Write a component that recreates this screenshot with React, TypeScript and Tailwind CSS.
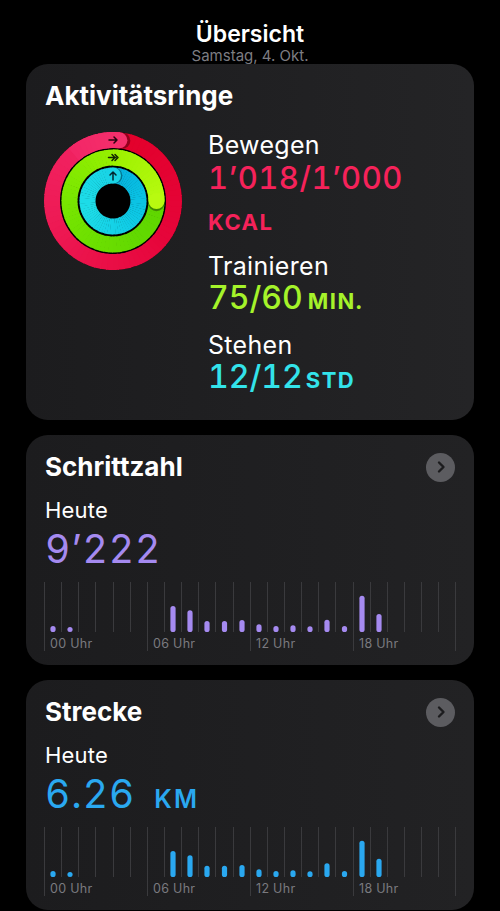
import React from "react";

type Stop = [number, string];

const toRad = (deg: number) => ((deg - 90) * Math.PI) / 180;
const pt = (cx: number, cy: number, r: number, deg: number): [number, number] => [
  cx + r * Math.cos(toRad(deg)),
  cy + r * Math.sin(toRad(deg)),
];
const arc = (cx: number, cy: number, r: number, a0: number, a1: number) => {
  const [x0, y0] = pt(cx, cy, r, a0);
  const [x1, y1] = pt(cx, cy, r, a1);
  const large = a1 - a0 > 180 ? 1 : 0;
  return `M ${x0.toFixed(2)} ${y0.toFixed(2)} A ${r} ${r} 0 ${large} 1 ${x1.toFixed(2)} ${y1.toFixed(2)}`;
};
const hex = (c: string) => [1, 3, 5].map((i) => parseInt(c.slice(i, i + 2), 16));
const colorAt = (stops: Stop[], t: number) => {
  for (let i = 0; i < stops.length - 1; i++) {
    const [t0, c0] = stops[i];
    const [t1, c1] = stops[i + 1];
    if (t >= t0 && t <= t1) {
      const k = (t - t0) / (t1 - t0 || 1);
      const a = hex(c0);
      const b = hex(c1);
      return `rgb(${a.map((v, j) => Math.round(v + (b[j] - v) * k)).join(",")})`;
    }
  }
  return stops[stops.length - 1][1];
};

function GradientArc({ r, w, a0, a1, stops }: { r: number; w: number; a0: number; a1: number; stops: Stop[] }) {
  const n = Math.max(4, Math.ceil((a1 - a0) / 5));
  const step = (a1 - a0) / n;
  const segs = [];
  for (let i = 0; i < n; i++) {
    const s = a0 + i * step;
    const e = Math.min(a1, s + step + 0.8);
    const t = (s + step / 2 - a0) / (a1 - a0);
    segs.push(<path key={i} d={arc(70, 70, r, s, e)} stroke={colorAt(stops, t)} strokeWidth={w} fill="none" />);
  }
  return <g>{segs}</g>;
}

function EndCap({ r, angle, color }: { r: number; angle: number; color: string }) {
  const [x, y] = pt(70, 70, r, angle);
  const [sx, sy] = pt(70, 70, r, angle + 2.5);
  return (
    <g>
      <circle cx={sx} cy={sy} r={8.3} fill="#000" opacity={0.35} />
      <circle cx={x} cy={y} r={8} fill={color} />
    </g>
  );
}

function Rings() {
  return (
    <svg width="140" height="140" viewBox="0 0 140 140">
      <circle cx="70" cy="70" r="69" fill="#000" />
      {/* Move */}
      <GradientArc r={61} w={16} a0={0} a1={360} stops={[[0, "#e2002a"], [0.35, "#e6053a"], [0.7, "#ee1a55"], [1, "#f22566"]]} />
      <GradientArc r={61} w={16} a0={320} a1={366} stops={[[0, "#f22566"], [1, "#f5306c"]]} />
      <EndCap r={61} angle={366} color="#f5306c" />
      {/* Exercise */}
      <GradientArc r={43.5} w={16} a0={0} a1={360} stops={[[0, "#5ad300"], [0.4, "#62d900"], [0.75, "#78e600"], [1, "#96f000"]]} />
      <GradientArc r={43.5} w={16} a0={0} a1={90} stops={[[0, "#9cf000"], [1, "#b8fa10"]]} />
      <EndCap r={43.5} angle={90} color="#b8fa10" />
      {/* Stand */}
      <GradientArc r={25.5} w={16} a0={0} a1={360} stops={[[0, "#05b2df"], [0.3, "#0cc6e5"], [0.7, "#1edde8"], [1, "#19d4e6"]]} />
      <EndCap r={25.5} angle={360} color="#19d4e6" />
      {/* arrows */}
      <g stroke="#2a0410" strokeWidth="1.5" fill="none" strokeLinecap="round" strokeLinejoin="round">
        <path d="M 66 9 L 74 9 M 71 6 L 74 9 L 71 12" />
      </g>
      <g stroke="#142800" strokeWidth="1.5" fill="none" strokeLinecap="round" strokeLinejoin="round">
        <path d="M 65.5 26.5 L 73 26.5 M 69 23.5 L 72 26.5 L 69 29.5 M 72 23.5 L 75 26.5 L 72 29.5" />
      </g>
      <g stroke="#02262e" strokeWidth="1.5" fill="none" strokeLinecap="round" strokeLinejoin="round">
        <path d="M 70 49 L 70 41 M 67 44 L 70 41 L 73 44" />
      </g>
    </svg>
  );
}

function ChevronButton() {
  return (
    <div className="flex h-[29px] w-[29px] items-center justify-center rounded-full bg-[#5c5c60]">
      <svg width="12" height="14" viewBox="0 0 12 14">
        <path d="M 4 2.5 L 8.5 7 L 4 11.5" stroke="#1c1c1e" strokeWidth="2.4" fill="none" strokeLinecap="round" strokeLinejoin="round" />
      </svg>
    </div>
  );
}

const lineX = (i: number) => Math.round(i * 17.14) + 0.5;

function HourChart({ data, color }: { data: Record<number, number>; color: string }) {
  const lines = [];
  for (let i = 0; i <= 24; i++) {
    const major = i % 6 === 0;
    lines.push(<line key={i} x1={lineX(i)} x2={lineX(i)} y1={0} y2={major ? 69 : 50} stroke="#3a3a3d" strokeWidth="1" />);
  }
  const bars = Object.entries(data).map(([k, h]) => {
    const i = Number(k);
    const cx = (lineX(i) + lineX(i + 1)) / 2;
    return <rect key={k} x={cx - 2.6} y={50 - h} width={5.2} height={h} rx={2.6} fill={color} />;
  });
  const labels = ["00 Uhr", "06 Uhr", "12 Uhr", "18 Uhr"].map((t, j) => (
    <text
      key={t}
      x={lineX(j * 6) + 5.5}
      y={65.5}
      fill="#7a7a7f"
      fontSize="12.5"
      letterSpacing="0.3"
      fontFamily="Inter, 'Liberation Sans', sans-serif"
    >
      {t}
    </text>
  ));
  return (
    <svg width="413" height="69" viewBox="0 0 413 69" className="-ml-px mt-[11px] block">
      {lines}
      {bars}
      {labels}
    </svg>
  );
}

const steps: Record<number, number> = { 0: 6, 1: 5, 7: 26, 8: 21.7, 9: 11, 10: 11, 11: 12, 12: 7.7, 13: 6, 14: 6.7, 15: 5.7, 16: 12.3, 17: 6, 18: 36.3, 19: 18 };
const dist: Record<number, number> = { 0: 6, 1: 5, 7: 26, 8: 21.7, 9: 11.3, 10: 11.3, 11: 12, 12: 7.7, 13: 6, 14: 6.7, 15: 5.7, 16: 13.7, 17: 6, 18: 36.3, 19: 18.3 };

function MetricCard({
  title,
  value,
  unit,
  textClass,
  barColor,
  data,
}: {
  title: string;
  value: string;
  unit?: string;
  textClass: string;
  barColor: string;
  data: Record<number, number>;
}) {
  return (
    <section className="rounded-[22px] bg-linear-to-r from-[#1c1c1e] to-[#222224] px-[19px] pt-[16px] pb-[14px]">
      <div className="flex items-center justify-between">
        <h2 className="text-[26px] leading-[32px] font-bold">{title}</h2>
        <ChevronButton />
      </div>
      <div className="mt-[14px] text-[22px] leading-[26px] tracking-[0.2px]">Heute</div>
      <div className={`mt-[4px] flex items-baseline text-[39px] leading-[44px] tracking-[1px] tabular-nums ${textClass}`}>
        <span>{value}</span>
        {unit && <span className="ml-[19px] text-[25px] leading-none font-semibold tracking-[2px]">{unit}</span>}
      </div>
      <HourChart data={data} color={barColor} />
    </section>
  );
}

export default function App() {
  return (
    <div className="min-h-[911px] bg-black text-white [font-family:Inter,'Liberation_Sans',sans-serif]">
      <header className="h-[64px] pt-[20px] text-center">
        <div className="text-[23px] leading-[28px] font-semibold">Übersicht</div>
        <div className="text-[15px] leading-[16px] text-[#7d7d82]">Samstag, 4. Okt.</div>
      </header>
      <div className="mx-[26px] flex flex-col gap-[15px]">
        <section className="rounded-[22px] bg-linear-to-r from-[#1c1c1e] to-[#242426] px-[19px] pt-[16px] pb-[25px]">
          <h2 className="text-[26px] leading-[32px] font-bold">Aktivitätsringe</h2>
          <div className="mt-[19px] flex items-start">
            <div className="-ml-[2px] shrink-0">
              <Rings />
            </div>
            <div className="ml-[25px]">
              <div className="text-[25px] leading-[28px] tracking-[0.3px]">Bewegen</div>
              <div className="text-[31px] leading-[38px] font-medium tracking-[0.5px] tabular-nums text-[#f5225a]">1’018/1’000</div>
              <div className="mt-[11px] text-[22px] leading-[28px] font-bold tracking-[1.5px] text-[#f5225a]">KCAL</div>
              <div className="mt-[16px] text-[25px] leading-[28px] tracking-[0.3px]">Trainieren</div>
              <div className="flex items-baseline text-[32px] leading-[36px] font-medium tabular-nums text-[#a5f32a]">
                <span>75/60</span>
                <span className="ml-[5px] text-[22px] leading-none font-bold tracking-[1.5px]">MIN.</span>
              </div>
              <div className="mt-[15px] text-[25px] leading-[28px] tracking-[0.3px]">Stehen</div>
              <div className="flex items-baseline text-[32px] leading-[36px] font-medium tabular-nums text-[#33e3ea]">
                <span>12/12</span>
                <span className="ml-[3px] text-[22px] leading-none font-bold tracking-[1.5px]">STD</span>
              </div>
            </div>
          </div>
        </section>
        <MetricCard title="Schrittzahl" value="9’222" textClass="text-[#a58af0]" barColor="#a58af0" data={steps} />
        <MetricCard title="Strecke" value="6.26" unit="KM" textClass="text-[#2aa8f0]" barColor="#2aa8f0" data={dist} />
      </div>
    </div>
  );
}
